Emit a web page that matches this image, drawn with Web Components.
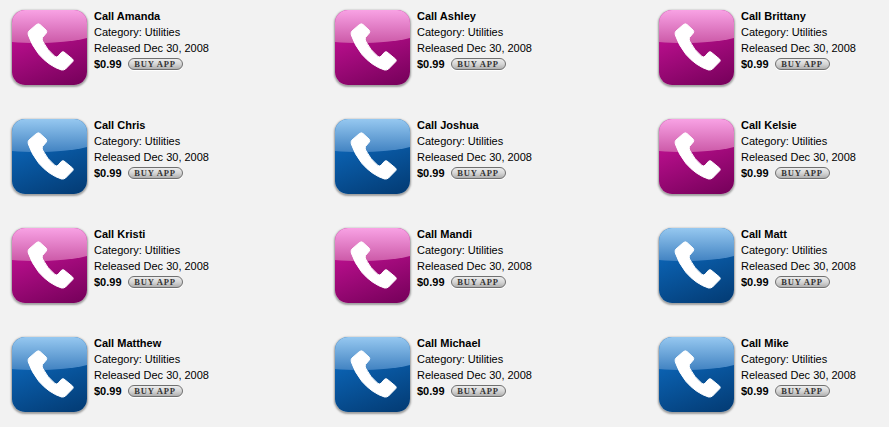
<!DOCTYPE html>
<html>
<head>
<meta charset="utf-8">
<title>Apps</title>
<style>
  html, body { margin: 0; height: 100%; background: #f2f2f2; overflow: hidden; }
  body { font-family: "Liberation Sans", Arial, sans-serif; }
</style>
</head>
<body>
<app-grid>
  <app-item name="Call Amanda" tone="pink"></app-item>
  <app-item name="Call Ashley" tone="pink"></app-item>
  <app-item name="Call Brittany" tone="pink"></app-item>
  <app-item name="Call Chris" tone="blue"></app-item>
  <app-item name="Call Joshua" tone="blue"></app-item>
  <app-item name="Call Kelsie" tone="pink"></app-item>
  <app-item name="Call Kristi" tone="pink"></app-item>
  <app-item name="Call Mandi" tone="pink"></app-item>
  <app-item name="Call Matt" tone="blue"></app-item>
  <app-item name="Call Matthew" tone="blue"></app-item>
  <app-item name="Call Michael" tone="blue"></app-item>
  <app-item name="Call Mike" tone="blue"></app-item>
</app-grid>

<script>
class AppGrid extends HTMLElement {
  constructor() {
    super();
    this.attachShadow({ mode: 'open' });
  }

  connectedCallback() {
    this.shadowRoot.innerHTML = `
      <style>
        :host {
          display: grid;
          grid-template-columns: 323px 324px 241px;
          grid-auto-rows: 109px;
          padding: 8px 0 0 12px;
        }
      </style>
      <slot></slot>
    `;
  }
}

class PhoneIcon extends HTMLElement {
  constructor() {
    super();
    this.attachShadow({ mode: 'open' });
  }

  connectedCallback() {
    const blue = this.getAttribute('tone') === 'blue';
    const top = blue ? '#0b62b2' : '#b80f8c';
    const bottom = blue ? '#033a72' : '#740059';
    const shineTop = blue ? '#96c8f0' : '#f8a2e4';
    const shineEnd = blue ? '#4283c2' : '#cc5aa8';
    this.shadowRoot.innerHTML = `
      <style>
        :host {
          display: block;
          width: 75px;
          height: 75px;
          margin-top: 2px;
          flex: none;
          border-radius: 13px;
          box-shadow: 0 1px 2px 1px rgba(0,0,0,.35);
          background: linear-gradient(160deg, ${top} 30%, ${bottom});
          overflow: hidden;
        }
        svg { display: block; }
      </style>
      <svg width="75" height="75" viewBox="0 0 75 75">
        <defs>
          <linearGradient id="shine" x1="0" y1="0" x2="0" y2="1">
            <stop offset="0" stop-color="${shineTop}"/>
            <stop offset="1" stop-color="${shineEnd}"/>
          </linearGradient>
        </defs>
        <path d="M0 0H75V28C56 33 24 34 0 32Z" fill="url(#shine)"/>
        <path d="M24.500 14.500Q26.500 13.200 28 14.500L34 20Q35.300 21.500 34.300 23L30.500 27.500Q29.800 29 30.600 31Q35 40 43 46.500Q44.500 47.500 46 46.300L49.500 42.300Q50.500 41.300 52 42L60.500 49Q61.800 50.300 60.800 51.600L53.500 59Q52 60.300 49.500 60Q37 56 27 44.500Q19.500 35 16.300 25Q15.600 22.500 17 21Z" fill="#fff" stroke="#fff" stroke-width="1" stroke-linejoin="round"/>
      </svg>
    `;
  }
}

class AppItem extends HTMLElement {
  constructor() {
    super();
    this.attachShadow({ mode: 'open' });
  }

  connectedCallback() {
    this.shadowRoot.innerHTML = `
      <style>
        :host {
          display: flex;
          gap: 7px;
          align-items: flex-start;
          font: 11px/16px "Liberation Sans", Arial, sans-serif;
          color: #000;
        }
        .name, .price { font-weight: bold; }
        .buy {
          display: flex;
          align-items: center;
          gap: 6px;
        }
        .btn {
          display: block;
          width: 53px;
          height: 10px;
          border: 1px solid #707070;
          border-radius: 6px;
          background: linear-gradient(#ececec, #d6d6d6 50%, #b0b0b0);
          box-shadow: 0 1px 0 #fff;
          font: bold 8.500px/10px "Liberation Serif", serif;
          letter-spacing: .8px;
          text-align: center;
          color: #333;
        }
      </style>
      <phone-icon tone="${this.getAttribute('tone')}"></phone-icon>
      <div>
        <div class="name">${this.getAttribute('name')}</div>
        <div>Category: Utilities</div>
        <div>Released Dec 30, 2008</div>
        <div class="buy"><span class="price">$0.99</span><span class="btn">BUY APP</span></div>
      </div>
    `;
  }
}

customElements.define('phone-icon', PhoneIcon);
customElements.define('app-item', AppItem);
customElements.define('app-grid', AppGrid);
</script>
</body>
</html>
